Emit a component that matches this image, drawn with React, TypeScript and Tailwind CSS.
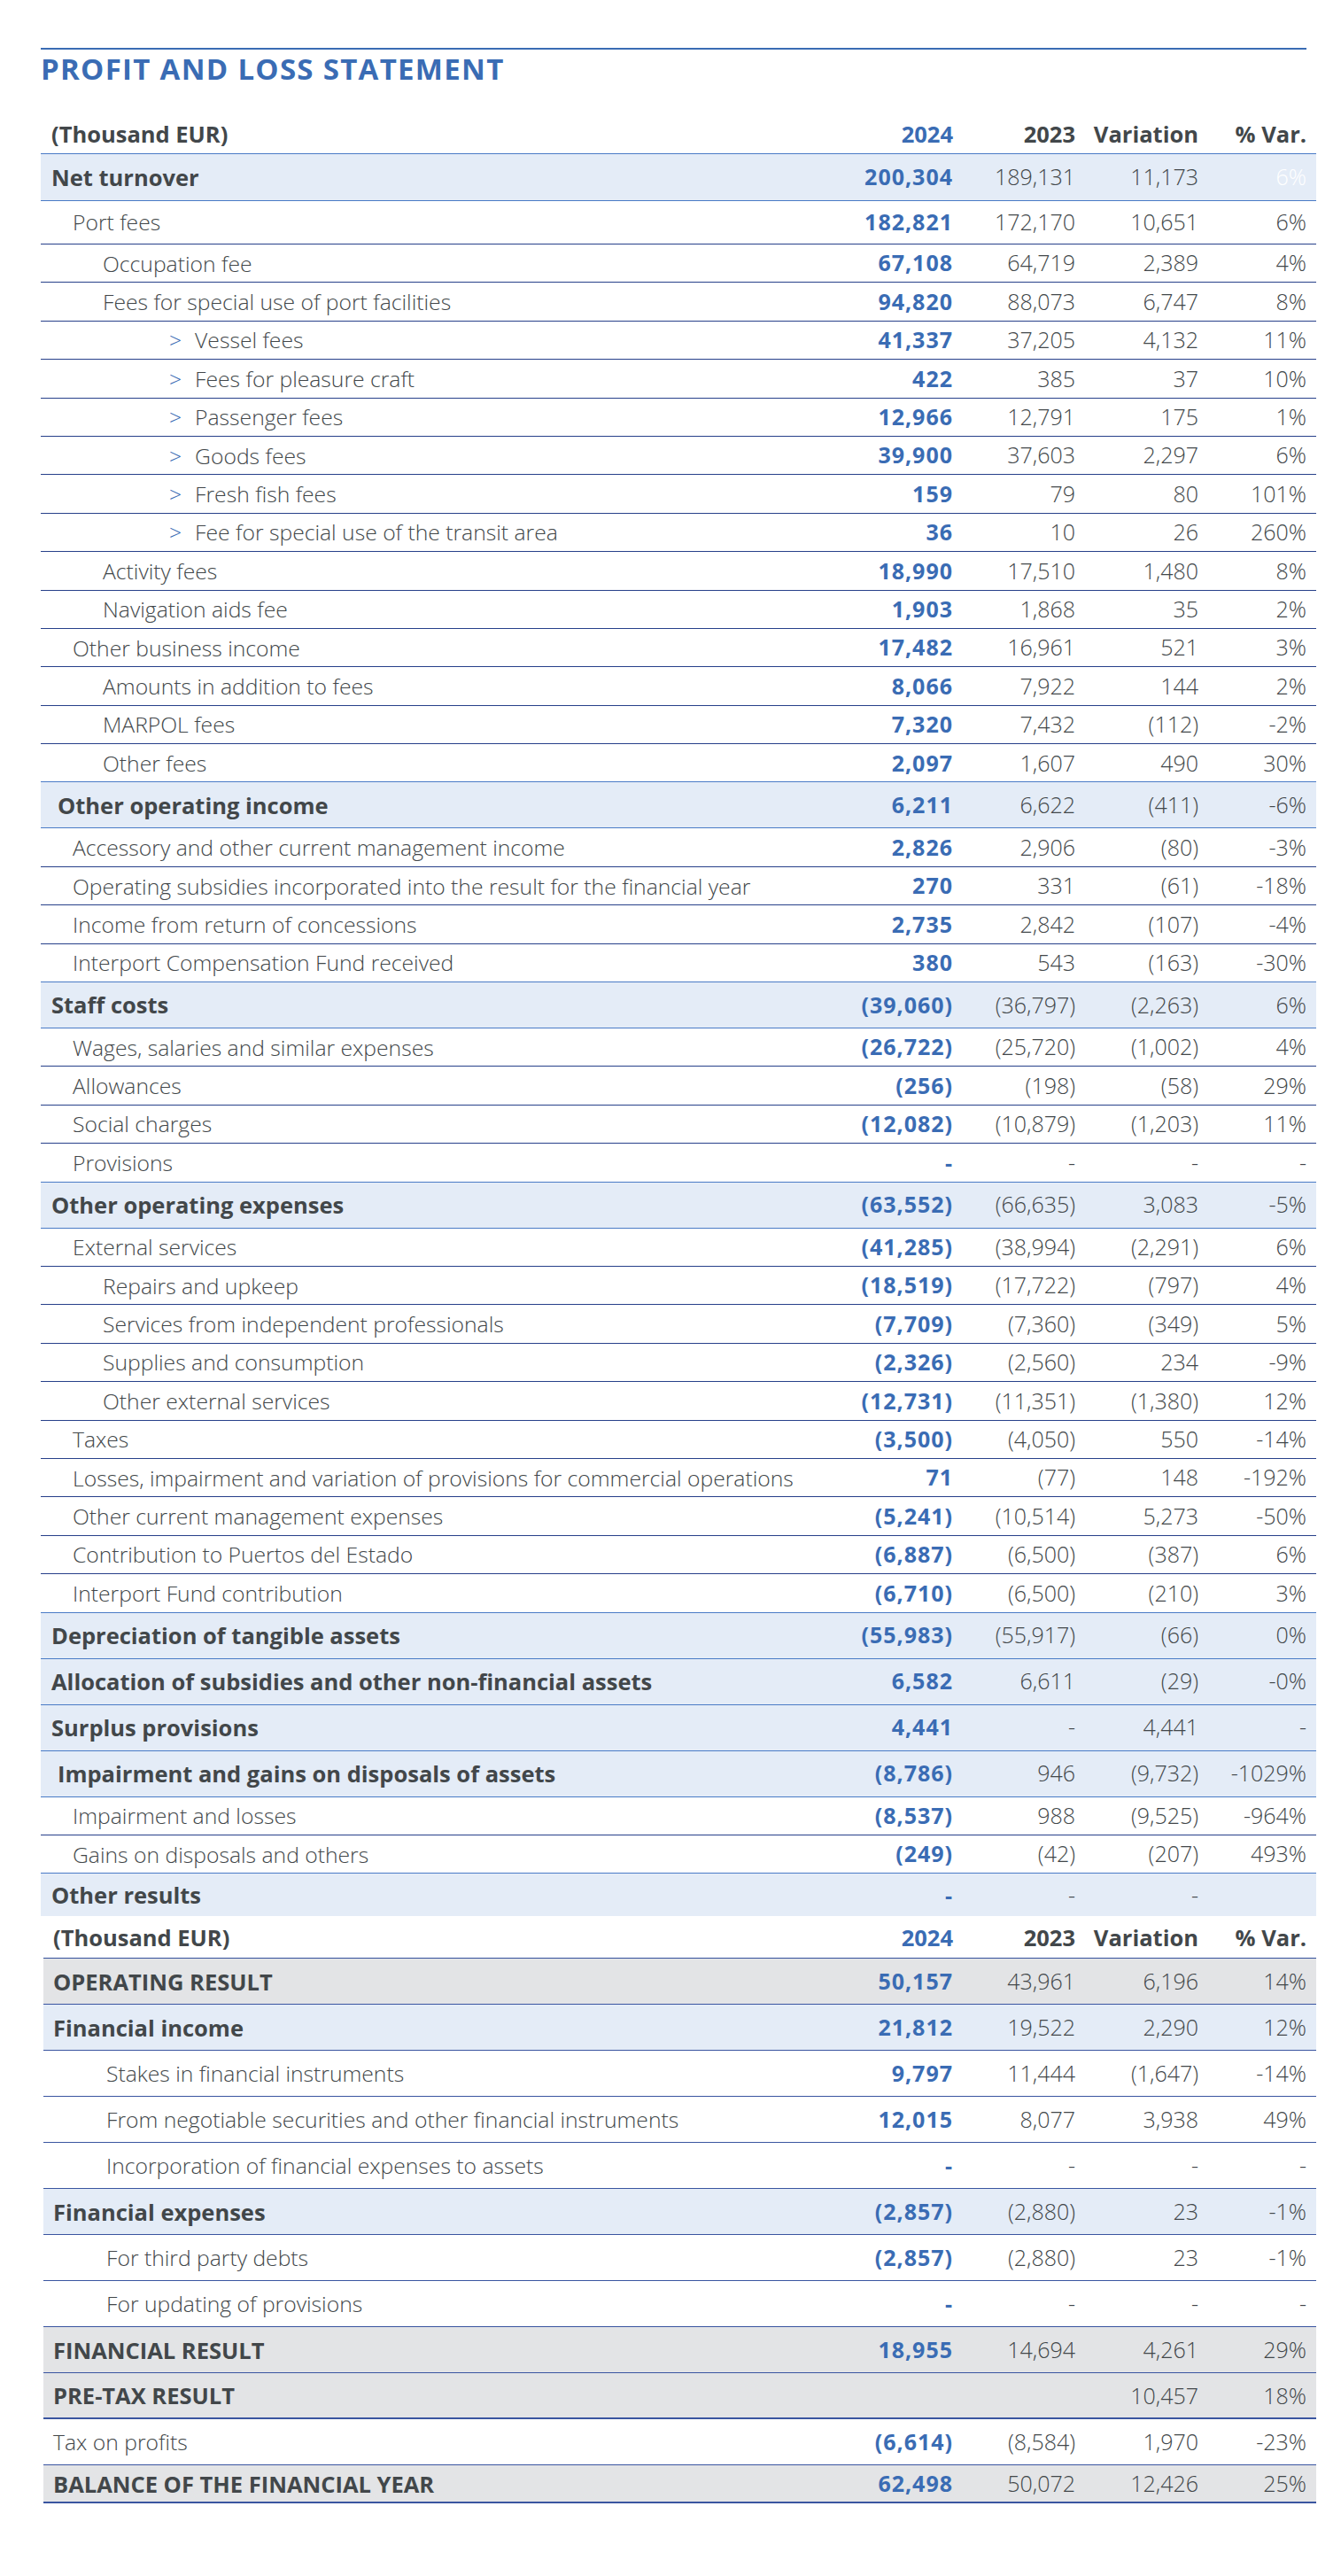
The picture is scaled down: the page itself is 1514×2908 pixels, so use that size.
import clsx from "clsx";

type Kind = "band" | "row" | "gray" | "head";

interface Row {
  label: string;
  v: string[];
  kind: Kind;
  pad: string;
  h?: string;
  chev?: boolean;
  white?: boolean;
}

const GRID = "grid grid-cols-[1fr_150px_138px_139px_122px] items-center pr-[11px]";

const L1 = "pl-[36px]";
const L2 = "pl-[70px]";
const L3 = "pl-[145px]";
const B0 = "pl-[12px]";
const B1 = "pl-[19px]";

const part1: Row[] = [
  { label: "Net turnover", v: ["200,304", "189,131", "11,173", "6%"], kind: "band", pad: B0, h: "h-[53px]", white: true },
  { label: "Port fees", v: ["182,821", "172,170", "10,651", "6%"], kind: "row", pad: L1, h: "h-[49px]" },
  { label: "Occupation fee", v: ["67,108", "64,719", "2,389", "4%"], kind: "row", pad: L2 },
  { label: "Fees for special use of port facilities", v: ["94,820", "88,073", "6,747", "8%"], kind: "row", pad: L2 },
  { label: "Vessel fees", v: ["41,337", "37,205", "4,132", "11%"], kind: "row", pad: L3, chev: true },
  { label: "Fees for pleasure craft", v: ["422", "385", "37", "10%"], kind: "row", pad: L3, chev: true },
  { label: "Passenger fees", v: ["12,966", "12,791", "175", "1%"], kind: "row", pad: L3, chev: true },
  { label: "Goods fees", v: ["39,900", "37,603", "2,297", "6%"], kind: "row", pad: L3, chev: true },
  { label: "Fresh fish fees", v: ["159", "79", "80", "101%"], kind: "row", pad: L3, chev: true },
  { label: "Fee for special use of the transit area", v: ["36", "10", "26", "260%"], kind: "row", pad: L3, chev: true },
  { label: "Activity fees", v: ["18,990", "17,510", "1,480", "8%"], kind: "row", pad: L2 },
  { label: "Navigation aids fee", v: ["1,903", "1,868", "35", "2%"], kind: "row", pad: L2 },
  { label: "Other business income", v: ["17,482", "16,961", "521", "3%"], kind: "row", pad: L1 },
  { label: "Amounts in addition to fees", v: ["8,066", "7,922", "144", "2%"], kind: "row", pad: L2 },
  { label: "MARPOL fees", v: ["7,320", "7,432", "(112)", "-2%"], kind: "row", pad: L2 },
  { label: "Other fees", v: ["2,097", "1,607", "490", "30%"], kind: "row", pad: L2 },
  { label: "Other operating income", v: ["6,211", "6,622", "(411)", "-6%"], kind: "band", pad: B1 },
  { label: "Accessory and other current management income", v: ["2,826", "2,906", "(80)", "-3%"], kind: "row", pad: L1 },
  { label: "Operating subsidies incorporated into the result for the financial year", v: ["270", "331", "(61)", "-18%"], kind: "row", pad: L1 },
  { label: "Income from return of concessions", v: ["2,735", "2,842", "(107)", "-4%"], kind: "row", pad: L1 },
  { label: "Interport Compensation Fund received", v: ["380", "543", "(163)", "-30%"], kind: "row", pad: L1 },
  { label: "Staff costs", v: ["(39,060)", "(36,797)", "(2,263)", "6%"], kind: "band", pad: B0 },
  { label: "Wages, salaries and similar expenses", v: ["(26,722)", "(25,720)", "(1,002)", "4%"], kind: "row", pad: L1 },
  { label: "Allowances", v: ["(256)", "(198)", "(58)", "29%"], kind: "row", pad: L1 },
  { label: "Social charges", v: ["(12,082)", "(10,879)", "(1,203)", "11%"], kind: "row", pad: L1 },
  { label: "Provisions", v: ["-", "-", "-", "-"], kind: "row", pad: L1 },
  { label: "Other operating expenses", v: ["(63,552)", "(66,635)", "3,083", "-5%"], kind: "band", pad: B0 },
  { label: "External services", v: ["(41,285)", "(38,994)", "(2,291)", "6%"], kind: "row", pad: L1 },
  { label: "Repairs and upkeep", v: ["(18,519)", "(17,722)", "(797)", "4%"], kind: "row", pad: L2 },
  { label: "Services from independent professionals", v: ["(7,709)", "(7,360)", "(349)", "5%"], kind: "row", pad: L2 },
  { label: "Supplies and consumption", v: ["(2,326)", "(2,560)", "234", "-9%"], kind: "row", pad: L2 },
  { label: "Other external services", v: ["(12,731)", "(11,351)", "(1,380)", "12%"], kind: "row", pad: L2 },
  { label: "Taxes", v: ["(3,500)", "(4,050)", "550", "-14%"], kind: "row", pad: L1 },
  { label: "Losses, impairment and variation of provisions for commercial operations", v: ["71", "(77)", "148", "-192%"], kind: "row", pad: L1 },
  { label: "Other current management expenses", v: ["(5,241)", "(10,514)", "5,273", "-50%"], kind: "row", pad: L1 },
  { label: "Contribution to Puertos del Estado", v: ["(6,887)", "(6,500)", "(387)", "6%"], kind: "row", pad: L1 },
  { label: "Interport Fund contribution", v: ["(6,710)", "(6,500)", "(210)", "3%"], kind: "row", pad: L1 },
  { label: "Depreciation of tangible assets", v: ["(55,983)", "(55,917)", "(66)", "0%"], kind: "band", pad: B0 },
  { label: "Allocation of subsidies and other non-financial assets", v: ["6,582", "6,611", "(29)", "-0%"], kind: "band", pad: B0 },
  { label: "Surplus provisions", v: ["4,441", "-", "4,441", "-"], kind: "band", pad: B0 },
  { label: "Impairment and gains on disposals of assets", v: ["(8,786)", "946", "(9,732)", "-1029%"], kind: "band", pad: B1 },
  { label: "Impairment and losses", v: ["(8,537)", "988", "(9,525)", "-964%"], kind: "row", pad: L1 },
  { label: "Gains on disposals and others", v: ["(249)", "(42)", "(207)", "493%"], kind: "row", pad: L1 },
  { label: "Other results", v: ["-", "-", "-", ""], kind: "band", pad: B0, h: "h-[48px]" },
];

const S0 = "pl-[11px]";
const S1 = "pl-[71px]";

const part2: Row[] = [
  { label: "OPERATING RESULT", v: ["50,157", "43,961", "6,196", "14%"], kind: "gray", pad: S0 },
  { label: "Financial income", v: ["21,812", "19,522", "2,290", "12%"], kind: "band", pad: S0 },
  { label: "Stakes in financial instruments", v: ["9,797", "11,444", "(1,647)", "-14%"], kind: "row", pad: S1 },
  { label: "From negotiable securities and other financial instruments", v: ["12,015", "8,077", "3,938", "49%"], kind: "row", pad: S1 },
  { label: "Incorporation of financial expenses to assets", v: ["-", "-", "-", "-"], kind: "row", pad: S1 },
  { label: "Financial expenses", v: ["(2,857)", "(2,880)", "23", "-1%"], kind: "band", pad: S0 },
  { label: "For third party debts", v: ["(2,857)", "(2,880)", "23", "-1%"], kind: "row", pad: S1 },
  { label: "For updating of provisions", v: ["-", "-", "-", "-"], kind: "row", pad: S1 },
  { label: "FINANCIAL RESULT", v: ["18,955", "14,694", "4,261", "29%"], kind: "gray", pad: S0 },
  { label: "PRE-TAX RESULT", v: ["", "", "10,457", "18%"], kind: "gray", pad: S0, h: "h-[52px] border-b-2" },
  { label: "Tax on profits", v: ["(6,614)", "(8,584)", "1,970", "-23%"], kind: "row", pad: S0 },
  { label: "BALANCE OF THE FINANCIAL YEAR", v: ["62,498", "50,072", "12,426", "25%"], kind: "gray", pad: S0, h: "h-[43px] border-b-2" },
];

function Cells({ r }: { r: Row }) {
  const bold = r.kind !== "row";
  return (
    <>
      <div className={clsx("whitespace-nowrap", r.pad, bold ? "text-[25.5px] font-bold" : "text-[24.7px] font-[350]")}>
        {r.chev && <span className="mr-[15px] text-[#3a6cb4]">&gt;</span>}
        {r.label}
      </div>
      <div className="text-right text-[25px] font-bold tracking-[1px] text-[#3a6cb4]">{r.v[0]}</div>
      <div className="text-right text-[25px] font-[350]">{r.v[1]}</div>
      <div className="text-right text-[25px] font-[350]">{r.v[2]}</div>
      <div className={clsx("text-right text-[25px] font-[350]", r.white && "text-white")}>{r.v[3]}</div>
    </>
  );
}

function Header() {
  return (
    <>
      <div className="text-[25.5px] font-bold">(Thousand EUR)</div>
      <div className="text-right text-[25.5px] font-bold text-[#3a6cb4]">2024</div>
      <div className="text-right text-[25.5px] font-bold">2023</div>
      <div className="text-right text-[25.5px] font-bold">Variation</div>
      <div className="text-right text-[25.5px] font-bold">% Var.</div>
    </>
  );
}

export default function App() {
  return (
    <div className="min-h-[2908px] w-[1514px] bg-white pt-[54px] font-['Open_Sans',sans-serif] text-[#42474a]">
      <div className="ml-[46px] h-[2px] w-[1429px] bg-[#3a6cb4]" />
      <h1 className="ml-[46px] mt-[6px] text-[33px] font-bold leading-[32px] tracking-[1.3px] text-[#3a6cb4]">
        PROFIT AND LOSS STATEMENT
      </h1>

      <div className="ml-[46px] mt-[36px] w-[1440px]">
        <div className={clsx(GRID, "h-[44px] border-b border-[#4a7bc6] pl-[12px]")}>
          <Header />
        </div>
        {part1.map((r, i) => {
          const next = part1[i + 1];
          const light = r.kind === "band" || (next && next.kind === "band");
          const last = i === part1.length - 1;
          return (
            <div
              key={r.label}
              className={clsx(
                GRID,
                r.h ?? (r.kind === "band" ? "h-[52px]" : "h-[43.4px]"),
                r.kind === "band" && "bg-[#e4ecf7]",
                !last && "border-b",
                light ? "border-[#4a7bc6]" : "border-[#27408a]"
              )}
            >
              <Cells r={r} />
            </div>
          );
        })}
      </div>

      <div className="ml-[49px] w-[1437px]">
        <div className={clsx(GRID, "h-[48px] border-b border-[#34509c] pl-[11px]")}>
          <Header />
        </div>
        {part2.map((r) => (
          <div
            key={r.label}
            className={clsx(
              GRID,
              r.h ?? "h-[52px] border-b",
              "border-[#3a55a0]",
              r.kind === "band" && "bg-[#e4ecf7]",
              r.kind === "gray" && "bg-[#e3e4e6]"
            )}
          >
            <Cells r={r} />
          </div>
        ))}
      </div>
    </div>
  );
}
